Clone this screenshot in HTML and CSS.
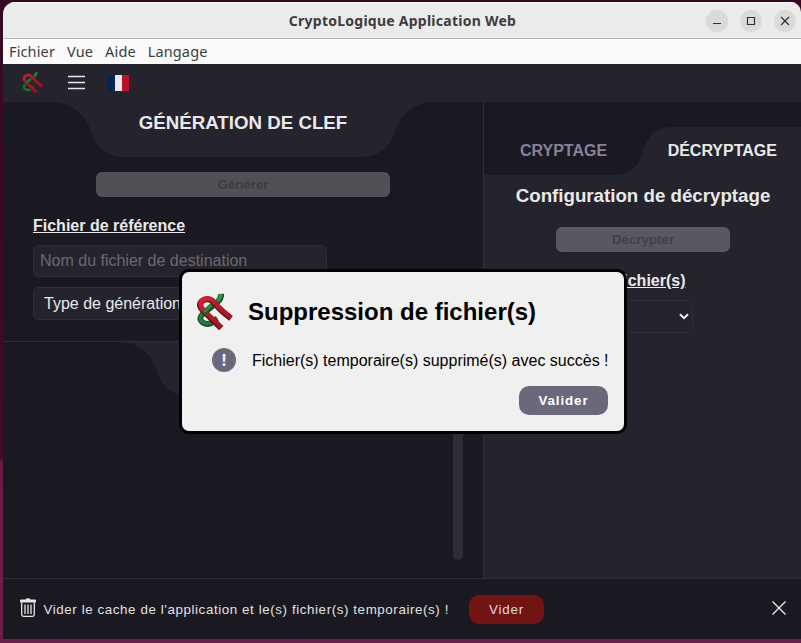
FILE: index.html
```html
<!DOCTYPE html>
<html lang="fr">
<head>
<meta charset="utf-8">
<title>CryptoLogique Application Web</title>
<link rel="stylesheet" href="styles.css">
</head>
<body>
<svg class="defs" aria-hidden="true">
  <defs>
    <linearGradient id="red" x1="0" y1="0" x2="1" y2="1"><stop offset="0" stop-color="#dc2230"/><stop offset=".45" stop-color="#b01b28"/><stop offset="1" stop-color="#a01520"/></linearGradient>
    <linearGradient id="green" x1="1" y1="0" x2="0" y2="1"><stop offset="0" stop-color="#36a04e"/><stop offset=".5" stop-color="#1a7035"/><stop offset="1" stop-color="#24803e"/></linearGradient>
    <symbol id="logo" viewBox="20 22 110 118">
      <g fill="none" stroke-linejoin="round">
        <path d="M92 27Q93 42 80 52L37 87Q24 100 35 111Q49 122 66 112Q74 104 80 100" stroke="#0f4f24" stroke-width="17"/>
        <path d="M91 28Q91 41 78 50L37 86Q25 99 35 110Q49 121 66 110Q73 103 79 98" stroke="url(#green)" stroke-width="10"/>
        <path d="M92 129L67 105L35 73Q24 60 34 49Q48 37 64 47L88 72Q105 88 121 100" stroke="#74101a" stroke-width="18"/>
        <path d="M93 127L68 103L36 72Q25 59 34 48Q48 36 64 45L89 70Q106 86 122 97" stroke="url(#red)" stroke-width="12"/>
        <path d="M42 83L64 62" stroke="#155c2a" stroke-width="16"/>
        <path d="M41 81L63 60" stroke="#2b8c46" stroke-width="8"/>
      </g>
    </symbol>
  </defs>
</svg>
<div class="window">
  <header class="titlebar">
    <span></span>
    <h1>CryptoLogique Application Web</h1>
    <div class="controls">
      <i><svg viewBox="0 0 22 22"><path d="M7 13.5h8"/></svg></i>
      <i><svg viewBox="0 0 22 22"><path d="M7.5 7.5h7v7h-7z"/></svg></i>
      <i><svg viewBox="0 0 22 22"><path d="M7 7l8 8M15 7l-8 8"/></svg></i>
    </div>
  </header>
  <nav class="menubar"><span>Fichier</span><span>Vue</span><span>Aide</span><span>Langage</span></nav>
  <div class="toolbar">
    <svg class="logo-small"><use href="#logo"/></svg>
    <svg class="burger" viewBox="0 0 18 16"><path d="M0 1.5h17M0 7.5h17M0 13.5h17"/></svg>
    <span class="flag"><b></b><b></b><b></b></span>
  </div>
  <main class="content">
    <div class="left">
      <section class="keygen">
        <div class="notch">
          <svg viewBox="0 0 384 55"><path d="M0 0C20 0 34 12 39 27C43 43 55 55 73 55H311C329 55 341 43 345 27C350 12 364 0 384 0Z"/></svg>
          <h2>GÉNÉRATION DE CLEF</h2>
        </div>
        <button class="disabled generate">Générer</button>
        <div class="form">
          <h3>Fichier de référence</h3>
          <div class="field name">Nom du fichier de destination</div>
          <div class="field type">Type de génération</div>
        </div>
      </section>
      <section class="result">
        <svg class="notch-low" viewBox="0 0 250 55"><path d="M0 0C20 0 34 12 38 27C42 43 55 55 73 55H177C195 55 207 43 211 27C216 12 229 0 249 0Z"/></svg>
        <div class="scrollbar"></div>
      </section>
    </div>
    <section class="right">
      <div class="tabs">
        <svg viewBox="0 0 318 73"><path d="M0 73H131C146 73 156 63 159 49C163 35 172 25 187 25H318V73Z"/></svg>
        <div class="labels"><span>CRYPTAGE</span><span class="active">DÉCRYPTAGE</span></div>
      </div>
      <h2>Configuration de décryptage</h2>
      <button class="disabled decrypt">Décrypter</button>
      <h3>Fichier(s)</h3>
      <div class="field select"><svg viewBox="0 0 10 7"><path d="M1 1.2l4 4 4-4"/></svg></div>
    </section>
  </main>
  <footer class="cachebar">
    <svg class="trash" viewBox="0 0 18 20"><path class="lid" d="M1 2.5Q1 1.5 2 1.5H6.500Q7 .2 9 .2T11.500 1.500H16Q17 1.500 17 2.500V4.500H1Z"/><path class="bin" d="M2.700 4.500V16.500Q2.700 18.300 4.500 18.300H13.500Q15.300 18.300 15.300 16.500V4.500M6 6.500V16M9 6.500V16M12 6.500V16"/></svg>
    <p>Vider le cache de l'application et le(s) fichier(s) temporaire(s) !</p>
    <button>Vider</button>
    <svg class="close" viewBox="0 0 14 14"><path d="M.5.5l13 13M13.500.5l-13 13"/></svg>
  </footer>
</div>
<div class="dialog" role="dialog">
  <div class="dialog-title"><svg><use href="#logo"/></svg><h2>Suppression de fichier(s)</h2></div>
  <div class="dialog-message"><span class="mark">!</span><p>Fichier(s) temporaire(s) supprimé(s) avec succès !</p></div>
  <button>Valider</button>
</div>
</body>
</html>
```
FILE: styles.css
```css
* { box-sizing: border-box; }
html, body { height: 100%; overflow: hidden; }
body {
  margin: 0;
  padding: 2px 0 4px 3px;
  background: linear-gradient(#360822 0, #3f0c29 458px, #651d45 463px, #681f48);
  font-family: "Liberation Sans", Arial, sans-serif;
  color: #e9e9e9;
}
h1, h2, h3, p { margin: 0; }
button { border: 0; font-family: inherit; padding: 0; }
svg { display: block; }
.defs { position: absolute; width: 0; height: 0; }

.window {
  height: 637px;
  display: flex;
  flex-direction: column;
  border-radius: 12px 10px 0 0;
  overflow: hidden;
  background: #1a1820;
}
.titlebar {
  height: 37px;
  flex: none;
  display: grid;
  grid-template-columns: 1fr auto 1fr;
  align-items: center;
  background: #ebebeb;
  border-top: 1px solid #fff;
  border-bottom: 1px solid #b7b7b7;
  color: #3d3d3d;
}
.titlebar h1 { font: bold 14px/20px "Noto Sans", sans-serif; letter-spacing: 0.25px; padding-left: 1px; }
.controls { display: flex; gap: 12px; justify-content: flex-end; padding-right: 5px; }
.controls i { width: 22px; height: 22px; border-radius: 50%; background: #dadada; }
.controls svg { fill: none; stroke: #303030; stroke-width: 1.2; }
.menubar {
  height: 25px;
  flex: none;
  display: flex;
  gap: 12px;
  padding-left: 6px;
  background: #fafafa;
  color: #3d3d3d;
  font: 14.5px/25px "Noto Sans", sans-serif;
  letter-spacing: 0.13px;
}
.toolbar {
  height: 38px;
  flex: none;
  display: flex;
  align-items: center;
  padding-left: 19px;
  background: #25232d;
}
.logo-small { width: 22px; height: 24px; opacity: .85; }
.burger { width: 18px; height: 16px; margin-left: 24px; stroke: #e8e8e8; stroke-width: 1.4; }
.flag { display: flex; width: 21px; height: 16px; margin: 0 0 0 22px; }
.flag b { flex: 1; background: #002654; }
.flag b:nth-child(2) { background: #e9e9e9; }
.flag b:nth-child(3) { background: #bd1023; }

.content { flex: 1; display: grid; grid-template-columns: 480px 1fr; min-height: 0; }
.left { display: flex; flex-direction: column; }
.keygen { height: 240px; border-bottom: 1px solid #302e39; display: flex; flex-direction: column; align-items: center; }
.notch { width: 384px; display: grid; height: 55px; }
.notch > * { grid-area: 1 / 1; }
.notch svg { width: 384px; height: 55px; }
.notch path, .notch-low path, .tabs path { fill: #25232d; }
.notch h2 { font-size: 18.72px; line-height: 22px; text-align: center; padding-top: 10px; }
.disabled { height: 25px; border-radius: 6px; font-size: 13.333px; font-weight: bold; background: #515054; color: #3d3c42; }
.generate { width: 294px; margin-top: 15px; }
.form { align-self: stretch; padding: 19px 0 0 30px; }
h3 { font-size: 16px; line-height: 19px; text-decoration: underline; }
.field { width: 294px; border: 1px solid #302e39; border-radius: 6px; background: #25232d; font-size: 16px; }
.name { height: 32px; margin-top: 10px; line-height: 30px; padding-left: 6px; color: #6b6a6e; }
.type { height: 33px; margin-top: 10px; line-height: 31px; padding-left: 10px; }
.result { flex: 1; display: flex; justify-content: space-between; padding: 0 20px 18px 115px; }
.notch-low { width: 250px; height: 55px; }
.scrollbar { width: 10px; margin-top: 40px; border-radius: 5px; background: #2f2c38; }

.right { border-left: 1px solid #302e39; background: #25232d; display: flex; flex-direction: column; align-items: center; }
.tabs { width: 100%; height: 73px; display: grid; background: #1a1820; }
.tabs > * { grid-area: 1 / 1; }
.tabs svg { width: 318px; height: 73px; }
.labels { display: flex; gap: 60.5px; padding: 39px 0 0 36px; font-size: 16px; font-weight: bold; line-height: 19px; color: #85829a; }
.labels .active { color: #e9e9e9; }
.right h2 { font-size: 18.72px; line-height: 22px; margin-top: 10px; }
.decrypt { width: 174px; margin-top: 20px; background: #59575f; color: #434149; }
.right h3 { margin: 19px 0 0; align-self: flex-start; padding-left: 129.5px; }
.right .select { width: 174px; height: 33px; margin: 10px 0 0 35px; align-self: flex-start; display: flex; align-items: center; justify-content: flex-end; padding-right: 3px; }
.select svg { width: 10px; height: 7px; fill: none; stroke: #eee; stroke-width: 2; }

.cachebar { height: 61px; flex: none; display: flex; align-items: center; border-top: 1px solid #302e39; padding: 0 15px 0 16px; font-size: 13.333px; }
.trash { width: 18px; height: 20px; margin: -3px 6.5px 0 0; }
.lid { fill: #e6e6e6; }
.bin { fill: none; stroke: #e6e6e6; stroke-width: 1.3; }
.cachebar p { letter-spacing: 0.6px; white-space: nowrap; color: #e2e2e2; }
.cachebar button { width: 75px; height: 29px; margin-left: 20px; border-radius: 10px; background: #731414; color: #ddd; font-size: 13.333px; letter-spacing: 0.8px; }
.close { width: 14px; height: 14px; margin: -3px 0 0 auto; stroke: #eee; stroke-width: 1.3; }

/* Modal shown above the application */
.dialog {
  position: absolute;
  left: 179px;
  top: 269px;
  width: 448px;
  height: 165px;
  border: 3px solid #000;
  border-radius: 10px;
  background: #f0f0f0;
  color: #000;
  padding: 20px 16px 0 15px;
  display: flex;
  flex-direction: column;
}
.dialog-title { display: flex; align-items: center; gap: 14px; height: 40px; }
.dialog-title svg { width: 37px; height: 40px; }
.dialog-title h2 { font-size: 24px; line-height: 28px; }
.dialog-message { display: flex; align-items: center; height: 26px; margin-top: 15px; padding-left: 15px; gap: 16px; white-space: nowrap; }
.dialog-message p { line-height: 20px; padding-top: 1px; }
.mark { flex: none; width: 24px; height: 24px; border-radius: 50%; background: #6b687b; color: #f0f0f0; font: bold 16px/24px "Noto Sans", sans-serif; text-align: center; }
.dialog > button { width: 89px; height: 29px; margin-top: 13px; align-self: flex-end; border-radius: 10px; background: #6b687b; color: #fff; font-size: 13.333px; font-weight: bold; letter-spacing: 0.9px; }
```
